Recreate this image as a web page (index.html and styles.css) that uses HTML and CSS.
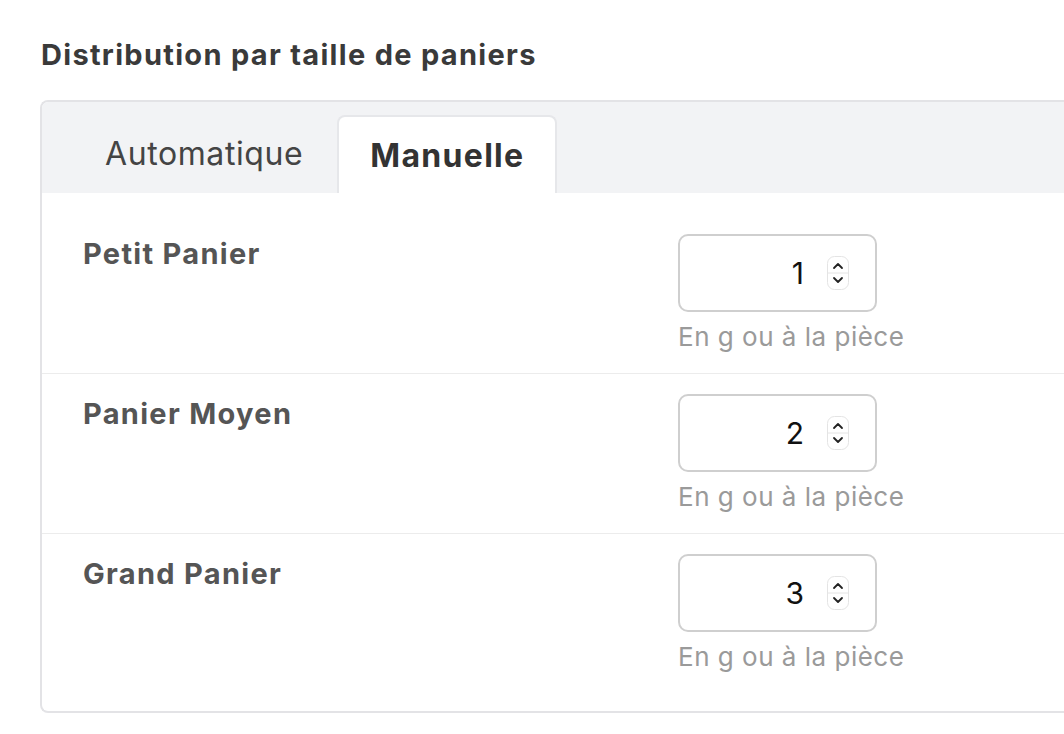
FILE: index.html
```html
<!DOCTYPE html>
<html lang="fr">
<head>
<meta charset="utf-8">
<link rel="stylesheet" href="styles.css">
</head>
<body>
<div class="page">
  <h2 class="title">Distribution par taille de paniers</h2>
  <div class="card">
    <div class="tabs">
      <div class="tab">Automatique</div>
      <div class="tab active">Manuelle</div>
    </div>
    <div class="body">
      <div class="row">
        <div class="label">Petit Panier</div>
        <div class="field">
          <div class="input"><span class="val">1</span><span class="spin"><svg viewBox="0 0 22 34" width="22" height="34"><rect x="0.5" y="0.5" width="21" height="33" rx="7" fill="#fff" stroke="#e4e4e4"/><line x1="1" y1="17" x2="21" y2="17" stroke="#e4e4e4"/><path d="M7 12 L11 8 L15 12" fill="none" stroke="#222" stroke-width="1.8" stroke-linecap="round" stroke-linejoin="round"/><path d="M7 22 L11 26 L15 22" fill="none" stroke="#222" stroke-width="1.8" stroke-linecap="round" stroke-linejoin="round"/></svg></span></div>
          <div class="hint">En g ou à la pièce</div>
        </div>
      </div>
      <div class="row">
        <div class="label">Panier Moyen</div>
        <div class="field">
          <div class="input"><span class="val">2</span><span class="spin"><svg viewBox="0 0 22 34" width="22" height="34"><rect x="0.5" y="0.5" width="21" height="33" rx="7" fill="#fff" stroke="#e4e4e4"/><line x1="1" y1="17" x2="21" y2="17" stroke="#e4e4e4"/><path d="M7 12 L11 8 L15 12" fill="none" stroke="#222" stroke-width="1.8" stroke-linecap="round" stroke-linejoin="round"/><path d="M7 22 L11 26 L15 22" fill="none" stroke="#222" stroke-width="1.8" stroke-linecap="round" stroke-linejoin="round"/></svg></span></div>
          <div class="hint">En g ou à la pièce</div>
        </div>
      </div>
      <div class="row">
        <div class="label">Grand Panier</div>
        <div class="field">
          <div class="input"><span class="val">3</span><span class="spin"><svg viewBox="0 0 22 34" width="22" height="34"><rect x="0.5" y="0.5" width="21" height="33" rx="7" fill="#fff" stroke="#e4e4e4"/><line x1="1" y1="17" x2="21" y2="17" stroke="#e4e4e4"/><path d="M7 12 L11 8 L15 12" fill="none" stroke="#222" stroke-width="1.8" stroke-linecap="round" stroke-linejoin="round"/><path d="M7 22 L11 26 L15 22" fill="none" stroke="#222" stroke-width="1.8" stroke-linecap="round" stroke-linejoin="round"/></svg></span></div>
          <div class="hint">En g ou à la pièce</div>
        </div>
      </div>
    </div>
  </div>
</div>
</body>
</html>
```
FILE: styles.css
```css
* { box-sizing: border-box; }
html, body { margin: 0; padding: 0; background: #fff; }
body {
  font-family: Inter, "Open Sans", "Liberation Sans", sans-serif;
  color: #333;
  width: 1064px;
  height: 734px;
  overflow: hidden;
}
.page {
  padding: 38px 0 0 40px;
}
.title {
  margin: 0 0 28px 1px;
  font-size: 29px;
  line-height: 34px;
  font-weight: 700;
  color: #3a3a3a;
  letter-spacing: 1.3px;
}
.card {
  width: 1060px;
  border: 2px solid #e3e3e6;
  border-right: none;
  border-radius: 8px 0 0 8px;
  overflow: hidden;
}
.tabs {
  display: flex;
  background: #f2f3f5;
  padding: 13px 0 0 28px;
  height: 92px;
  border-bottom: 1px solid #fff;
}
.tab {
  padding: 0 34px 0 35px;
  font-size: 32px;
  line-height: 78px;
  color: #444;
  letter-spacing: 0.6px;
}
.tab.active {
  background: #fff;
  border: 2px solid #e6e7ea;
  border-bottom: none;
  border-radius: 8px 8px 0 0;
  font-weight: 700;
  color: #333;
  padding: 0 31px;
  line-height: 77px;
  letter-spacing: 1.3px;
}
.body {
  padding: 20px 0 18px;
}
.row {
  display: flex;
  padding: 20px 0 20px 41px;
  border-top: 1px solid #ececec;
}
.row:first-child { border-top: none; }
.label {
  width: 595px;
  font-size: 29px;
  line-height: 36px;
  font-weight: 700;
  color: #555;
  padding-top: 2px;
  letter-spacing: 1.3px;
}
.field {
  display: flex;
  flex-direction: column;
}
.input {
  width: 199px;
  height: 78px;
  border: 2px solid #cfcfcf;
  border-radius: 10px;
  display: flex;
  align-items: center;
  justify-content: flex-end;
  padding-right: 26px;
}
.val {
  font-size: 30px;
  color: #111;
  margin-right: 23px;
}
.spin { display: flex; }
.hint {
  margin-top: 8px;
  font-size: 26px;
  line-height: 33px;
  color: #9a9a9a;
  letter-spacing: 0.5px;
}
```
